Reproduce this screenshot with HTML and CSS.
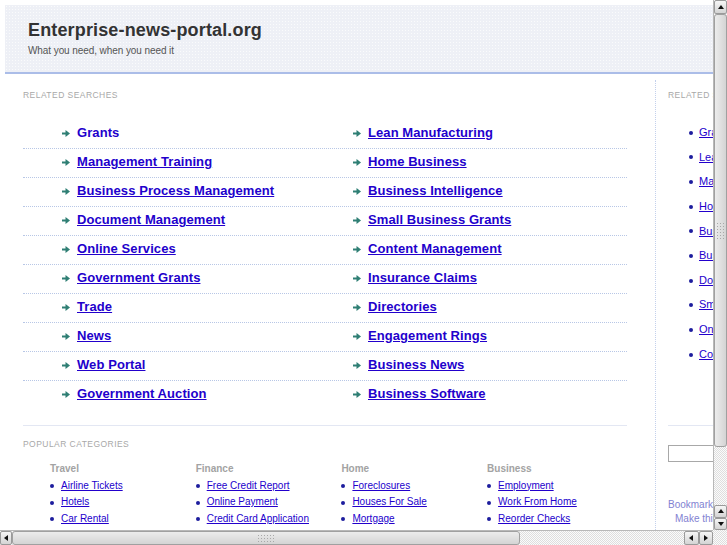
FILE: index.html
```html
<!DOCTYPE html>
<html lang="en">
<head>
<meta charset="utf-8">
<title>Enterprise-news-portal.org</title>
<link rel="stylesheet" href="styles.css">
</head>
<body>
<svg class="defs" width="0" height="0" aria-hidden="true">
  <symbol id="arr" viewBox="0 0 8 7">
    <rect x="0" y="2.5" width="4.5" height="2" fill="#2f7f74"/>
    <path d="M3.5 0 L8 3.5 L3.5 7 Z" fill="#2f7f74"/>
  </symbol>
</svg>
<div class="window">
  <div class="viewport">
    <div class="page">
      <header class="masthead">
        <h1 class="site-title">Enterprise-news-portal.org</h1>
        <p class="tagline">What you need, when you need it</p>
      </header>
      <div class="main">
        <section class="content">
          <h2 class="label">Related Searches</h2>
          <ul class="searches">
            <li class="row">
              <span class="cell"><svg class="arrow"><use href="#arr"/></svg><a class="term plain" href="#">Grants</a></span>
              <span class="cell"><svg class="arrow"><use href="#arr"/></svg><a class="term" href="#">Lean Manufacturing</a></span>
            </li>
            <li class="row">
              <span class="cell"><svg class="arrow"><use href="#arr"/></svg><a class="term" href="#">Management Training</a></span>
              <span class="cell"><svg class="arrow"><use href="#arr"/></svg><a class="term" href="#">Home Business</a></span>
            </li>
            <li class="row">
              <span class="cell"><svg class="arrow"><use href="#arr"/></svg><a class="term" href="#">Business Process Management</a></span>
              <span class="cell"><svg class="arrow"><use href="#arr"/></svg><a class="term" href="#">Business Intelligence</a></span>
            </li>
            <li class="row">
              <span class="cell"><svg class="arrow"><use href="#arr"/></svg><a class="term" href="#">Document Management</a></span>
              <span class="cell"><svg class="arrow"><use href="#arr"/></svg><a class="term" href="#">Small Business Grants</a></span>
            </li>
            <li class="row">
              <span class="cell"><svg class="arrow"><use href="#arr"/></svg><a class="term" href="#">Online Services</a></span>
              <span class="cell"><svg class="arrow"><use href="#arr"/></svg><a class="term" href="#">Content Management</a></span>
            </li>
            <li class="row">
              <span class="cell"><svg class="arrow"><use href="#arr"/></svg><a class="term" href="#">Government Grants</a></span>
              <span class="cell"><svg class="arrow"><use href="#arr"/></svg><a class="term" href="#">Insurance Claims</a></span>
            </li>
            <li class="row">
              <span class="cell"><svg class="arrow"><use href="#arr"/></svg><a class="term" href="#">Trade</a></span>
              <span class="cell"><svg class="arrow"><use href="#arr"/></svg><a class="term" href="#">Directories</a></span>
            </li>
            <li class="row">
              <span class="cell"><svg class="arrow"><use href="#arr"/></svg><a class="term" href="#">News</a></span>
              <span class="cell"><svg class="arrow"><use href="#arr"/></svg><a class="term" href="#">Engagement Rings</a></span>
            </li>
            <li class="row">
              <span class="cell"><svg class="arrow"><use href="#arr"/></svg><a class="term" href="#">Web Portal</a></span>
              <span class="cell"><svg class="arrow"><use href="#arr"/></svg><a class="term" href="#">Business News</a></span>
            </li>
            <li class="row">
              <span class="cell"><svg class="arrow"><use href="#arr"/></svg><a class="term" href="#">Government Auction</a></span>
              <span class="cell"><svg class="arrow"><use href="#arr"/></svg><a class="term" href="#">Business Software</a></span>
            </li>
          </ul>
          <section class="popular">
            <h2 class="label">Popular Categories</h2>
            <div class="cats">
              <div class="cat">
                <h3 class="cat-title">Travel</h3>
                <ul class="cat-list">
                  <li><a href="#">Airline Tickets</a></li>
                  <li><a href="#">Hotels</a></li>
                  <li><a href="#">Car Rental</a></li>
                </ul>
              </div>
              <div class="cat">
                <h3 class="cat-title">Finance</h3>
                <ul class="cat-list">
                  <li><a href="#">Free Credit Report</a></li>
                  <li><a href="#">Online Payment</a></li>
                  <li><a href="#">Credit Card Application</a></li>
                </ul>
              </div>
              <div class="cat">
                <h3 class="cat-title">Home</h3>
                <ul class="cat-list">
                  <li><a href="#">Foreclosures</a></li>
                  <li><a href="#">Houses For Sale</a></li>
                  <li><a href="#">Mortgage</a></li>
                </ul>
              </div>
              <div class="cat">
                <h3 class="cat-title">Business</h3>
                <ul class="cat-list">
                  <li><a href="#">Employment</a></li>
                  <li><a href="#">Work From Home</a></li>
                  <li><a href="#">Reorder Checks</a></li>
                </ul>
              </div>
            </div>
          </section>
        </section>
        <aside class="aside">
          <h2 class="label">Related Searches</h2>
          <ul class="side-list">
            <li><a href="#">Grants</a></li>
            <li><a href="#">Lean Manufacturing</a></li>
            <li><a href="#">Management Training</a></li>
            <li><a href="#">Home Business</a></li>
            <li><a href="#">Business Process Management</a></li>
            <li><a href="#">Business Intelligence</a></li>
            <li><a href="#">Document Management</a></li>
            <li><a href="#">Small Business Grants</a></li>
            <li><a href="#">Online Services</a></li>
            <li><a href="#">Content Management</a></li>
          </ul>
          <div class="side-rule"></div>
          <input class="search-box" type="text" aria-label="Search">
          <div class="side-foot">
            <a class="foot-line" href="#">Bookmark this page</a>
            <a class="foot-line indent" href="#">Make this your homepage</a>
          </div>
        </aside>
      </div>
    </div>
  </div>
  <div class="vscroll">
    <div class="sb-btn v-top"><span class="tri up"></span></div>
    <div class="thumb thumb-v"><span class="grip grip-v"></span></div>
    <div class="track"></div>
    <div class="sb-btn v-pair"><span class="tri up"></span></div>
    <div class="sb-btn v-pair"><span class="tri down"></span></div>
  </div>
  <div class="hscroll">
    <div class="sb-btn h-left"><span class="tri left"></span></div>
    <div class="thumb thumb-h"><span class="grip grip-h"></span></div>
    <div class="track"></div>
    <div class="sb-btn h-pair"><span class="tri left"></span></div>
    <div class="sb-btn h-pair"><span class="tri right"></span></div>
  </div>
  <div class="corner"></div>
</div>
</body>
</html>
```

FILE: styles.css
```css
* { box-sizing: border-box; margin: 0; padding: 0; }

html, body {
  width: 727px;
  height: 545px;
  overflow: hidden;
  background: #fff;
}

body {
  font-family: "Liberation Sans", Arial, sans-serif;
  color: #333;
}

.defs { display: block; width: 0; height: 0; }

.window {
  display: grid;
  grid-template-columns: 713px 14px;
  grid-template-rows: 530px 15px;
  width: 727px;
  height: 545px;
}

.viewport {
  overflow: hidden;
  background: #fff;
}

.page {
  width: 880px;
  padding: 5px 0 0 5px;
}

/* header */
.masthead {
  height: 69px;
  background-color: #eef0f6;
  background-image: radial-gradient(circle, rgba(255,255,255,0.7) 0.6px, transparent 0.9px);
  background-size: 3px 3px;
  border-bottom: 2px solid #abbde8;
  padding: 15px 0 0 23px;
}

.site-title {
  font-size: 18px;
  line-height: 21px;
  font-weight: bold;
  letter-spacing: 0.15px;
  color: #333;
}

.tagline {
  margin-top: 4px;
  font-size: 10px;
  line-height: 12px;
  letter-spacing: -0.08px;
  color: #555;
}

/* main */
.main {
  display: flex;
  margin-top: 6px;
  min-height: 470px;
}

.content {
  flex: none;
  width: 650px;
  padding: 10px 28px 0 18px;
}

.label {
  font-size: 8.5px;
  line-height: 10px;
  letter-spacing: 0.45px;
  font-weight: normal;
  text-transform: uppercase;
  color: #a8a8a8;
  white-space: nowrap;
}

.searches {
  list-style: none;
  margin-top: 20px;
}

.row {
  display: grid;
  grid-template-columns: 291px 1fr;
  padding-left: 39px;
  padding-bottom: 2px;
  line-height: 26px;
  border-bottom: 1px dotted #b8c7e6;
}

.row:last-child {
  border-bottom: none;
}

.cell {
  display: flex;
  align-items: center;
}

.arrow {
  width: 8px;
  height: 7px;
  margin-right: 7px;
  flex: none;
}

.term {
  font-size: 13px;
  font-weight: bold;
  letter-spacing: 0.08px;
  color: #2200cc;
  text-decoration: underline;
  white-space: nowrap;
}

.term.plain {
  text-decoration: none;
}

/* popular */
.popular {
  margin-top: 16px;
  border-top: 1px solid #e3e7f3;
  padding-top: 13px;
}

.cats {
  display: grid;
  grid-template-columns: repeat(4, 145.7px);
  padding-left: 27px;
  margin-top: 14px;
}

.cat-title {
  font-size: 10px;
  line-height: 12px;
  font-weight: bold;
  color: #a3a3a3;
  margin-bottom: 2.5px;
}

.cat-list {
  list-style: none;
}

.cat-list li,
.side-list li {
  display: flex;
  align-items: center;
  white-space: nowrap;
}

.cat-list li {
  font-size: 10px;
  line-height: 16.5px;
}

.cat-list li::before,
.side-list li::before {
  content: "";
  flex: none;
  width: 4px;
  height: 4px;
  border-radius: 50%;
  background: #1d1d9e;
  margin-right: 7px;
  margin-top: 1px;
}

.cat-list a,
.side-list a {
  color: #2200cc;
  text-decoration: underline;
}

/* sidebar */
.aside {
  flex: none;
  width: 200px;
  border-left: 1px dotted #c3d0ec;
  padding: 10px 0 0 12px;
}

.side-list {
  list-style: none;
  margin-top: 20px;
  padding-left: 21px;
}

.side-list li {
  font-size: 11px;
  line-height: 24.64px;
}

.side-list li::before {
  margin-right: 6px;
}

.side-rule {
  margin-top: 58.5px;
  border-top: 1px solid #e3e7f3;
}

.search-box {
  display: block;
  margin-top: 19px;
  width: 150px;
  height: 17px;
  border: 1px solid #a8a8a8;
  background: #fff;
}

.side-foot {
  margin-top: 36px;
  font-size: 10px;
  line-height: 14px;
}

.foot-line {
  display: block;
  color: #8282d2;
  text-decoration: none;
  white-space: nowrap;
}

.foot-line.indent {
  padding-left: 7px;
}

/* scrollbars */
.vscroll,
.hscroll,
.corner,
.track {
  background-color: #f4f4f4;
  background-image: repeating-conic-gradient(#dedede 0 25%, #fbfbfb 0 50%);
  background-size: 2px 2px;
}

.vscroll {
  display: flex;
  flex-direction: column;
  border-left: 1px solid #b8b8b8;
}

.hscroll {
  display: flex;
  border-top: 1px solid #b8b8b8;
}

.track {
  flex: 1;
}

.sb-btn {
  flex: none;
  display: flex;
  align-items: center;
  justify-content: center;
  background: linear-gradient(#f6f6f6, #d4d4d4);
  border: 1px solid #9a9a9a;
  border-radius: 2px;
}

.v-top { height: 14px; }
.v-pair { height: 12.5px; }
.h-left { width: 12px; }
.h-pair { width: 14.5px; }

.tri {
  width: 0;
  height: 0;
}

.tri.up {
  border-left: 3.5px solid transparent;
  border-right: 3.5px solid transparent;
  border-bottom: 4px solid #111;
}

.tri.down {
  border-left: 3.5px solid transparent;
  border-right: 3.5px solid transparent;
  border-top: 4px solid #111;
}

.tri.left {
  border-top: 3.5px solid transparent;
  border-bottom: 3.5px solid transparent;
  border-right: 4px solid #111;
}

.tri.right {
  border-top: 3.5px solid transparent;
  border-bottom: 3.5px solid transparent;
  border-left: 4px solid #111;
}

.thumb {
  flex: none;
  display: flex;
  align-items: center;
  justify-content: center;
  border: 1px solid #a0a0a0;
  border-radius: 3px;
}

.thumb-v {
  height: 433px;
  background: linear-gradient(90deg, #ececec, #d4d4d4);
}

.thumb-h {
  width: 508px;
  background: linear-gradient(#ececec, #d4d4d4);
}

.grip {
  display: block;
  background-image: radial-gradient(circle, #a8a8a8 0.7px, transparent 1px);
  background-size: 3px 3px;
}

.grip-v {
  width: 9px;
  height: 18px;
}

.grip-h {
  width: 18px;
  height: 9px;
}
```
